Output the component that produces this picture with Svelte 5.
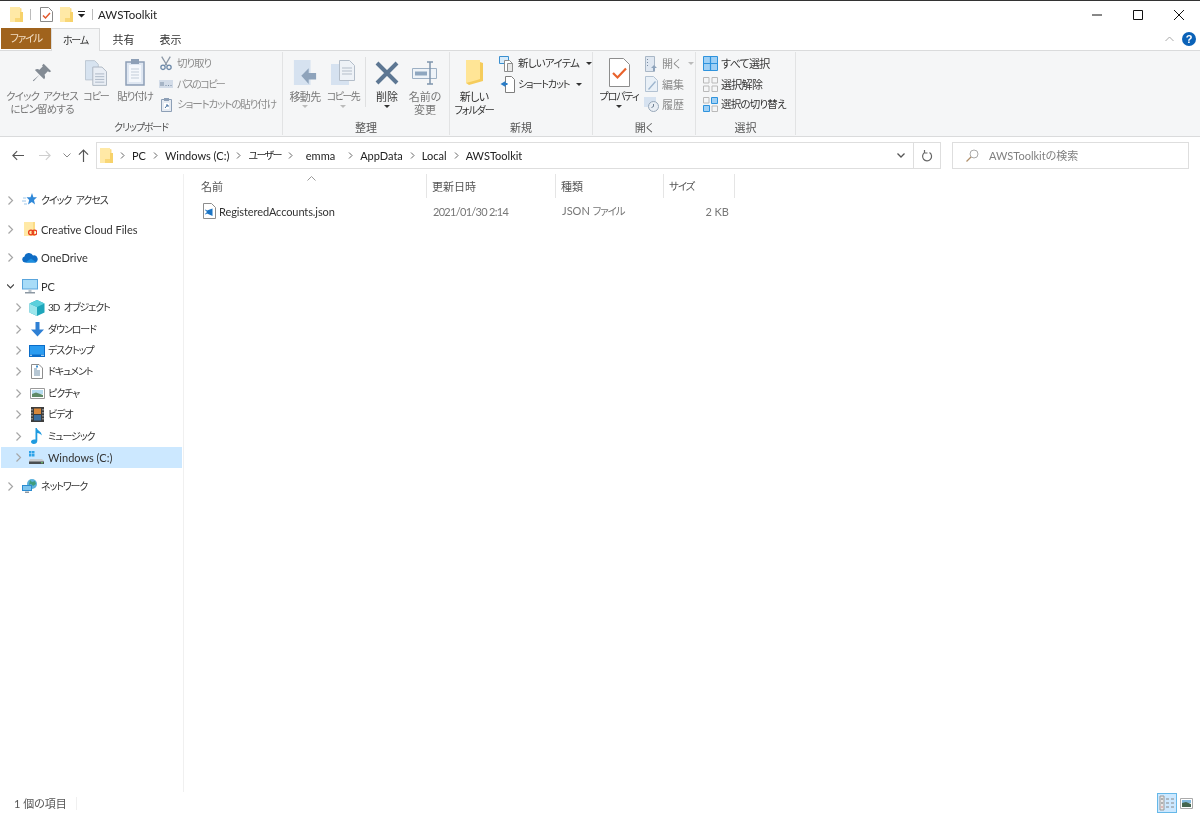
<script>
	const icons = {
		folder: `<svg width="13" height="15" viewBox="0 0 13 15"><path d="M0 0h10v15H0z" fill="#ffe9a6"/><path d="M10 1l1.500 .5V5H10z" fill="#fbdc86"/><path d="M5 11h8v4H5z" fill="#f9d777"/><path d="M10 5h3v10h-3z" fill="#f7d26a"/></svg>`,
		check: `<svg width="13" height="15" viewBox="0 0 13 15"><path d="M.5.5h8l4 4v10H.5z" fill="#fff" stroke="#8a8a8a"/><path d="M3 8.500l2.500 2.500 4.500-5" fill="none" stroke="#e2582c" stroke-width="1.500"/></svg>`,
		star: `<svg width="16" height="16" viewBox="0 0 16 16"><path d="M10 1l1.400 4.200H15l-3 2.800 1 4.500-3.200-2.400L6 12.500l1.200-4.400L4.500 5.200h4z" fill="#2f88d8"/><path d="M1 6h3M0 9h4M2 12h3" stroke="#9cc6ea"/></svg>`,
		cc: `<svg width="14" height="16" viewBox="0 0 14 16"><path d="M1 1h11v14H1z" fill="#fbdc86"/><path d="M1 1h9v14H1z" fill="#ffe9a6"/><circle cx="8" cy="11.500" r="2.400" fill="none" stroke="#e8401e" stroke-width="1.300"/><circle cx="11.500" cy="11.500" r="2.400" fill="none" stroke="#e8401e" stroke-width="1.300"/></svg>`,
		cloud: `<svg width="16" height="11" viewBox="0 0 16 11"><path d="M3 10.500a3 3 0 0 1-.5-5.900A4.500 4.500 0 0 1 11 3.500a3.500 3.500 0 0 1 2 7z" fill="#0f6cc4"/><path d="M3.500 10.500L9 6.500l5.500 4z" fill="#1c8fe0"/></svg>`,
		pc: `<svg width="16" height="15" viewBox="0 0 16 15"><path d="M0 0h16v10.500H0z" fill="#5aa5dc"/><path d="M1 1h14v8.500H1z" fill="#a8dcf8"/><path d="M6.500 10.500h3V13h-3z" fill="#b9c3cb"/><path d="M3 13h10v1.500H3z" fill="#8c98a3"/></svg>`,
		cube: `<svg width="16" height="16" viewBox="0 0 16 16"><path d="M8 0l7.500 3.500v9L8 16 .5 12.500v-9z" fill="#1ea6bb"/><path d="M.5 3.500L8 7v9L.5 12.500z" fill="#9ce6ec"/><path d="M8 7l7.500-3.500L8 0 .5 3.500z" fill="#5bd0dc"/></svg>`,
		down: `<svg width="15" height="15" viewBox="0 0 15 15"><path d="M5.500 0h4v7.500H14L7.500 14.500 1 7.500h4.500z" fill="#2f80d4"/></svg>`,
		desk: `<svg width="16" height="12" viewBox="0 0 16 12"><path d="M0 0h16v12H0z" fill="#0a6cc8"/><path d="M1 1h14v8.500H1z" fill="#2b9cf0"/><path d="M1 10.300h2M12 10.300h3" stroke="#bfe0f8"/></svg>`,
		doc: `<svg width="12" height="15" viewBox="0 0 12 15"><path d="M.5.5h7.500l3.500 3.500v10.500H.5z" fill="#fff" stroke="#8d8d8d"/><path d="M3 5h3M3 7h6M3 9h6M3 11h6" stroke="#6f8fa8"/><path d="M5 1.500h2v2H5z" fill="#3f8fd0"/></svg>`,
		pic: `<svg width="15" height="11" viewBox="0 0 15 11"><path d="M.5.5h14v10H.5z" fill="#fff" stroke="#9a9a9a"/><path d="M2 2h11v4H2z" fill="#b5dcf0"/><path d="M2 6l4-1.500L13 7v2H2z" fill="#5f8a66"/></svg>`,
		film: `<svg width="13" height="15" viewBox="0 0 13 15"><path d="M0 0h13v15H0z" fill="#3d3d3d"/><path d="M3 1.500h7v5.500H3z" fill="#d8873a"/><path d="M3 8h7v5.500H3z" fill="#3a6ea0"/><path d="M1 2v11M12 2v11" stroke="#cfcfcf" stroke-dasharray="1.500 1.500"/></svg>`,
		note: `<svg width="12" height="16" viewBox="0 0 12 16"><path d="M4.500 0h1.300c.5 2.500 5 3.500 5 7.500-1-1.500-3-2.500-4.500-2.500v8c0 2-1.700 3-3.500 3C1 16 0 15 0 13.800c0-1.500 1.700-2.800 4.500-2.200z" fill="#1e9be0"/></svg>`,
		drive: `<svg width="16" height="15" viewBox="0 0 16 15"><path d="M0 1h2.500v2.500H0zM3 1h2.500v2.500H3zM0 4h2.500v2.500H0zM3 4h2.500v2.500H3z" fill="#2ea3e8"/><path d="M1 9h12l2 2v3H0v-3z" fill="#c8ccd0"/><path d="M0 11.500h15V14H0z" fill="#4a4f52"/><path d="M12 12.300h2v1h-2z" fill="#6fd06f"/></svg>`,
		net: `<svg width="16" height="15" viewBox="0 0 16 15"><circle cx="10" cy="5" r="5" fill="#5bb1dc"/><path d="M8 1l2 2 3-1 1 3-3 2-2-2-2 1z" fill="#3e9c7c"/><path d="M0 6h10v6H0z" fill="#2b8bd0"/><path d="M1 7h8v4H1z" fill="#7cc4ee"/><path d="M3 12.500h4V14H3z" fill="#8c98a3"/></svg>`,
		vsjson: `<svg width="13" height="16" viewBox="0 0 13 16"><path d="M.5.5h8l4 4v11H.5z" fill="#fff" stroke="#8d8d8d"/><path d="M9.500 5.500v7.500L4 10.500l-1.500 1L2 11l2-2-2-2 .5-.5L4 7.500z" fill="#1b74c4"/></svg>`,
		pin: `<svg width="20" height="20" viewBox="0 0 24 24"><path d="M14 1l9 9-2 1-2-1-4 4c1 2 1 4-.5 5.500L9 14 2 22l-1-1 8-7-5.500-5.500C5 7 7 7 9 8l4-4-1-1z" fill="#838b94"/></svg>`,
		copy: `<svg width="22" height="26" viewBox="0 0 24 28"><path d="M.5.5h10l4 4v17H.5z" fill="#d7e3f0" stroke="#b9c4d0"/><path d="M8.500 7.500h10l5 5v15h-15z" fill="#e9eef5" stroke="#aab4c0"/><path d="M11 15h10M11 18h10M11 21h10M11 24h10" stroke="#a9b5c3"/></svg>`,
		paste: `<svg width="20" height="27" viewBox="0 0 20 27"><path d="M1 3h18v23H1z" fill="#dfe7f2" stroke="#8d9fb6" stroke-width="1.500"/><path d="M4 6h12v17H4z" fill="#f5f8fc"/><path d="M6 0h8v5H6z" fill="#8d9fb6"/><path d="M6 10h8M6 13h8M6 16h8M6 19h8" stroke="#c3cdd9"/></svg>`,
		cut: `<svg width="12" height="15" viewBox="0 0 14 16"><path d="M2 0l6 10M12 0L6 10" stroke="#8b97a5" stroke-width="1.500"/><circle cx="3.500" cy="12.500" r="2.500" fill="none" stroke="#6b88a8" stroke-width="1.500"/><circle cx="10.500" cy="12.500" r="2.500" fill="none" stroke="#6b88a8" stroke-width="1.500"/></svg>`,
		path: `<svg width="14" height="8" viewBox="0 0 14 8"><path d="M0 0h14v8H0z" fill="#d3dce8"/><path d="M2 2v4M4 2v4M7 5v1M9.500 5v1M12 5v1" stroke="#7a8da3"/></svg>`,
		short: `<svg width="11" height="14" viewBox="0 0 11 14"><path d="M.5 1.500h10v12H.5z" fill="#e6ebf2" stroke="#8d9fb6"/><path d="M3 0h5v3H3z" fill="#8d9fb6"/><path d="M3 5h5v6H3z" fill="#fff"/><path d="M4 10l2.500-3M5 7h2v2" fill="none" stroke="#446f9f"/></svg>`,
		move: `<svg width="24" height="25" viewBox="0 0 24 27"><path d="M0 0h18v27H0z" fill="#d6e2f0"/><path d="M8 17l8-8v5h8v7h-8v5z" fill="#8ea3bb"/></svg>`,
		copyto: `<svg width="24" height="25" viewBox="0 0 24 25"><path d="M0 4h18v21H0z" fill="#d6e2f0"/><path d="M8.500.5h10l5 5v15h-15z" fill="#eef2f7" stroke="#b3bdc9"/><path d="M11 8h10M11 11h10M11 14h10" stroke="#b3bdc9"/></svg>`,
		del: `<svg width="24" height="24" viewBox="0 0 24 24"><path d="M2 2l20 20M22 2L2 22" stroke="#5d7793" stroke-width="4"/></svg>`,
		rename: `<svg width="26" height="24" viewBox="0 0 26 24"><path d="M.5 7.500h24v10H.5z" fill="#eef3f8" stroke="#9db0c4"/><path d="M3 10.500h12v4H3z" fill="#8ea6bf"/><path d="M18 1v22M15 1h6M15 23h6" stroke="#7f95ad" stroke-width="1.500"/></svg>`,
		newfolder: `<svg width="17" height="25" viewBox="0 0 17 25"><path d="M0 0h14v2l3 1v18l-14 4-3-2z" fill="#f5cc5c"/><path d="M0 0h14v19l-3 1-11 3z" fill="#ffe596"/></svg>`,
		newitem: `<svg width="16" height="16" viewBox="0 0 16 16"><path d="M.5.500h9v7h-9z" fill="#d7ebfa" stroke="#3a8fd0"/><path d="M5.500 4.500h5l3 3v8h-8z" fill="#fff" stroke="#8d8d8d"/><path d="M8.500 7.500h5v8h-5z" fill="#e8e8e8" stroke="#8d8d8d"/></svg>`,
		newshort: `<svg width="15" height="17" viewBox="0 0 15 17"><path d="M5.500.5h6l3 3v13h-9z" fill="#fff" stroke="#7e7e7e"/><path d="M.5 8l5-3v2h2v2h-2v2z" fill="#2a7dc8"/></svg>`,
		props: `<svg width="21" height="29" viewBox="0 0 21 29"><path d="M.5.5h14l6 6v22H.5z" fill="#fff" stroke="#8d8d8d"/><path d="M4 15l4.500 4.500L17 10.500" fill="none" stroke="#e8622c" stroke-width="2.200"/></svg>`,
		open: `<svg width="13" height="16" viewBox="0 0 13 16"><path d="M.5.500h9v15h-9z" fill="#dfe7f1" stroke="#a9b7c6"/><path d="M2 3h1v1H2zM2 6h1v1H2zM2 9h1v1H2z" fill="#7a8da3"/><path d="M9 9l3 3h-2v3H8v-3H6z" fill="#8ea3bb"/></svg>`,
		edit: `<svg width="13" height="16" viewBox="0 0 13 16"><path d="M.5.500h8l4 4v11H.5z" fill="#e9f0f7" stroke="#b3c2d2"/><path d="M3 13l7-8 1 1-7 8z" fill="#9cb4cd"/></svg>`,
		hist: `<svg width="15" height="15" viewBox="0 0 15 15"><path d="M0 0h12v10H0z" fill="#d6e2f0"/><circle cx="9.500" cy="9.500" r="5" fill="#e9eef4" stroke="#97a7b8"/><path d="M9.500 7v2.500l-2 1" fill="none" stroke="#6f8093"/></svg>`,
		selall: `<svg width="15" height="15" viewBox="0 0 15 15"><path d="M.5.500h14v14H.5z" fill="#9fd0f5" stroke="#2e93dd"/><path d="M7.500 0v15M0 7.500h15" stroke="#2e93dd" stroke-width="1.200"/></svg>`,
		selnone: `<svg width="15" height="15" viewBox="0 0 15 15"><path d="M.5.500h5.500v5.500H.5zM9 .5h5.500v5.500H9zM.5 9h5.500v5.500H.5zM9 9h5.500v5.500H9z" fill="none" stroke="#b9b9b9"/></svg>`,
		selinv: `<svg width="15" height="15" viewBox="0 0 15 15"><path d="M.5.500h5.500v5.500H.5zM9 9h5.500v5.500H9z" fill="none" stroke="#b9b9b9"/><path d="M8.500.5h6v6h-6zM.5 8.500h6v6h-6z" fill="#9fd0f5" stroke="#2e93dd"/></svg>`
	};

	const navRows = [
		{ icon: 'star', label: 'クイック アクセス', depth: 0, gap: 0 },
		{ icon: 'cc', label: 'Creative Cloud Files', depth: 0, gap: 7.500 },
		{ icon: 'cloud', label: 'OneDrive', depth: 0, gap: 7 },
		{ icon: 'pc', label: 'PC', depth: 0, gap: 7.500, open: true },
		{ icon: 'cube', label: '3D オブジェクト', depth: 1 },
		{ icon: 'down', label: 'ダウンロード', depth: 1 },
		{ icon: 'desk', label: 'デスクトップ', depth: 1 },
		{ icon: 'doc', label: 'ドキュメント', depth: 1 },
		{ icon: 'pic', label: 'ピクチャ', depth: 1 },
		{ icon: 'film', label: 'ビデオ', depth: 1 },
		{ icon: 'note', label: 'ミュージック', depth: 1 },
		{ icon: 'drive', label: 'Windows (C:)', depth: 1, selected: true },
		{ icon: 'net', label: 'ネットワーク', depth: 0, gap: 7.500 }
	];

	const crumbs = ['PC', 'Windows (C:)', 'ユーザー', 'emma', 'AppData', 'Local', 'AWSToolkit'];
	const columns = ['名前', '更新日時', '種類', 'サイズ'];
	const hasKana = (s) => /[\u30a0-\u30ff]/.test(s);
</script>

<div class="window">
	<header class="titlebar">
		<span class="ico">{@html icons.folder}</span>
		<i class="qsep"></i>
		<span class="ico">{@html icons.check}</span>
		<span class="ico">{@html icons.folder}</span>
		<svg class="qdrop" width="7" height="7" viewBox="0 0 7 7"><path d="M0 0h7v1H0zM0 3h7L3.500 6.500z" fill="#222" /></svg>
		<i class="qsep"></i>
		<span class="title">AWSToolkit</span>
		<div class="winbtns">
			<svg width="10" height="10" viewBox="0 0 10 10"><path d="M0 5h10" stroke="#111" /></svg>
			<svg width="10" height="10" viewBox="0 0 10 10"><path d="M.5.5h9v9h-9z" fill="none" stroke="#111" /></svg>
			<svg width="10" height="10" viewBox="0 0 10 10"><path d="M0 0l10 10M10 0L0 10" stroke="#111" /></svg>
		</div>
	</header>

	<nav class="tabs">
		<button class="tab file k15">ファイル</button>
		<button class="tab active k2">ホーム</button>
		<button class="tab">共有</button>
		<button class="tab">表示</button>
		<div class="tabs-right">
			<svg width="9" height="6" viewBox="0 0 9 6"><path d="M.5 5L4.500 1l4 4" fill="none" stroke="#a8a8a8" /></svg>
			<span class="help">?</span>
		</div>
	</nav>

	<section class="ribbon">
		<div class="group" style="width:283px">
			<div class="items clip">
				<div class="big off pinbtn">
					<span class="ico h30">{@html icons.pin}</span>
					<span class="k1">クイック アクセス<br />にピン留めする</span>
				</div>
				<div class="big off copybtn">
					<span class="ico h30">{@html icons.copy}</span>
					<span class="k2">コピー</span>
				</div>
				<div class="big off pastebtn">
					<span class="ico h30">{@html icons.paste}</span>
					<span class="k15">貼り付け</span>
				</div>
				<div class="smalls off">
					<div class="small"><span class="ico s16">{@html icons.cut}</span><span class="k15">切り取り</span></div>
					<div class="small"><span class="ico s16">{@html icons.path}</span><span class="k25">パスのコピー</span></div>
					<div class="small"><span class="ico s16">{@html icons.short}</span><span class="k15">ショートカットの貼り付け</span></div>
				</div>
			</div>
			<div class="glabel k2">クリップボード</div>
		</div>

		<div class="group" style="width:167px">
			<div class="items org">
				<div class="big off w38">
					<span class="ico h30">{@html icons.move}</span>
					<span class="k05">移動先</span>
					<b class="caret light"></b>
				</div>
				<div class="big off w38">
					<span class="ico h30">{@html icons.copyto}</span>
					<span class="k25">コピー先</span>
					<b class="caret light"></b>
				</div>
				<i class="vsep"></i>
				<div class="big w38">
					<span class="ico h30">{@html icons.del}</span>
					<span>削除</span>
					<b class="caret"></b>
				</div>
				<div class="big off w38">
					<span class="ico h30">{@html icons.rename}</span>
					<span>名前の<br />変更</span>
				</div>
			</div>
			<div class="glabel">整理</div>
		</div>

		<div class="group" style="width:143px">
			<div class="items nw">
				<div class="big w48">
					<span class="ico h30">{@html icons.newfolder}</span>
					<span class="k05">新しい<br /><span class="k2">フォルダー</span></span>
				</div>
				<div class="smalls">
					<div class="small"><span class="ico s16">{@html icons.newitem}</span><span class="k1">新しいアイテム</span><b class="caret"></b></div>
					<div class="small"><span class="ico s16">{@html icons.newshort}</span><span class="k2">ショートカット</span><b class="caret"></b></div>
				</div>
			</div>
			<div class="glabel">新規</div>
		</div>

		<div class="group" style="width:103px">
			<div class="items op">
				<div class="big w52">
					<span class="ico h30">{@html icons.props}</span>
					<span class="k2">プロパティ</span>
					<b class="caret"></b>
				</div>
				<div class="smalls off">
					<div class="small"><span class="ico s16">{@html icons.open}</span>開く<b class="caret light"></b></div>
					<div class="small"><span class="ico s16">{@html icons.edit}</span>編集</div>
					<div class="small"><span class="ico s16">{@html icons.hist}</span>履歴</div>
				</div>
			</div>
			<div class="glabel">開く</div>
		</div>

		<div class="group" style="width:100px">
			<div class="items sel">
				<div class="smalls">
					<div class="small"><span class="ico s16">{@html icons.selall}</span><span class="k05">すべて選択</span></div>
					<div class="small"><span class="ico s16">{@html icons.selnone}</span><span class="k05">選択解除</span></div>
					<div class="small"><span class="ico s16">{@html icons.selinv}</span><span class="k1">選択の切り替え</span></div>
				</div>
			</div>
			<div class="glabel">選択</div>
		</div>
	</section>

	<div class="addressrow">
		<div class="navbtns">
			<svg width="12" height="11" viewBox="0 0 14 12"><path d="M6 1L1 6l5 5M1 6h13" fill="none" stroke="#555" stroke-width="1.300" /></svg>
			<svg width="12" height="11" viewBox="0 0 14 12"><path d="M8 1l5 5-5 5M13 6H0" fill="none" stroke="#cfcfcf" stroke-width="1.300" /></svg>
			<svg width="8" height="5" viewBox="0 0 8 5"><path d="M.5.5L4 4 7.500.5" fill="none" stroke="#888" /></svg>
			<svg width="11" height="13" viewBox="0 0 12 14"><path d="M1 6l5-5 5 5M6 1v13" fill="none" stroke="#555" stroke-width="1.300" /></svg>
		</div>
		<div class="addressbox">
			<span class="ico">{@html icons.folder}</span>
			<div class="crumbs">
				{#each crumbs as crumb}
					<svg width="5" height="7" viewBox="0 0 5 7"><path d="M1 .5L4 3.500 1 6.500" fill="none" stroke="#666" /></svg>
					<span class:k25={hasKana(crumb)} class:pad={crumb === 'emma'}>{crumb}</span>
				{/each}
			</div>
			<div class="addr-end">
				<svg width="8" height="5" viewBox="0 0 8 5"><path d="M.5.5L4 4 7.500.5" fill="none" stroke="#555" stroke-width="1.300" /></svg>
			</div>
			<div class="addr-refresh">
				<svg width="12" height="12" viewBox="0 0 12 12"><path d="M4 2.300A4.500 4.500 0 1 0 8.500 2.500M3.500 0v3h3" fill="none" stroke="#666" stroke-width="1.200" /></svg>
			</div>
		</div>
		<div class="searchbox">
			<svg width="13" height="13" viewBox="0 0 13 13"><circle cx="8" cy="5" r="4" fill="none" stroke="#aaa" /><path d="M5 8l-4.500 4.500" stroke="#b08f6a" stroke-width="1.200" /></svg>
			<span>AWSToolkitの検索</span>
		</div>
	</div>

	<div class="body">
		<aside class="navpane">
			{#each navRows as row}
				<div class="navrow depth{row.depth}" class:selected={row.selected} style="margin-top:{row.gap ?? 0}px">
					<svg class="chev" width="7" height="9" viewBox="0 0 7 9">
						{#if row.open}
							<path d="M0 2.500l3.500 3.500L7 2.500" fill="none" stroke="#444" stroke-width="1.200" />
						{:else}
							<path d="M1.500.5l4 4-4 4" fill="none" stroke="#a6a6a6" stroke-width="1.200" />
						{/if}
					</svg>
					<span class="ico nav-ico">{@html icons[row.icon]}</span>
					<span class:k2={hasKana(row.label)}>{row.label}</span>
				</div>
			{/each}
		</aside>

		<main class="files">
			<svg class="sortcaret" width="9" height="5" viewBox="0 0 9 5"><path d="M.5 4.500l4-4 4 4" fill="none" stroke="#999" /></svg>
			<div class="filerow head">
				{#each columns as col}
					<div class="col"><span class:k15={hasKana(col)}>{col}</span></div>
				{/each}
			</div>
			<div class="filerow item">
				<div class="fname"><span class="ico">{@html icons.vsjson}</span>RegisteredAccounts.json</div>
				<div class="fmeta date">2021/01/30 2:14</div>
				<div class="fmeta">JSON <span class="k15">ファイル</span></div>
				<div class="fmeta size">2 KB</div>
			</div>
		</main>
	</div>

	<footer class="status">
		<span class="count">1 個の項目</span>
		<div class="views">
			<span class="view on">
				<svg width="16" height="16" viewBox="0 0 16 16"><path d="M1 1h4v14H1z" fill="#e8e8e8" stroke="#999" /><path d="M2 4h2M2 8h2" stroke="#777" /><path d="M2 12h2" stroke="#d98a8a" /><path d="M7 4h3M12 4h3M7 8h3M12 8h3M7 12h3M12 12h3" stroke="#888" /></svg>
			</span>
			<span class="view">
				<svg width="13" height="11" viewBox="0 0 13 11"><path d="M.5.5h12v10H.5z" fill="#fff" stroke="#aaa" /><path d="M2 2h9v3H2z" fill="#7fb7dc" /><path d="M2 5l4-1 5 2v3H2z" fill="#44664f" /></svg>
			</span>
		</div>
	</footer>
</div>

<style>
	:global(body) {
		margin: 0;
		background: #fff;
	}
	.window {
		width: 1200px;
		height: 814px;
		display: flex;
		flex-direction: column;
		overflow: hidden;
		border-top: 1px solid #333;
		box-sizing: border-box;
		color: #333;
		font-family: Lato, "Noto Sans CJK JP", sans-serif;
		font-feature-settings: "palt";
		font-size: 11px;
		line-height: 13px;
		filter: blur(0.35px);
	}
	.ico {
		display: inline-flex;
		align-items: center;
		justify-content: center;
		flex: none;
	}
	.ico :global(svg) {
		display: block;
	}
	/* kana runs are much narrower in the original UI font */
	.k05 {
		letter-spacing: -0.7px;
	}
	.k1 {
		font-size: 10.500px;
		letter-spacing: -0.800px;
		word-spacing: 2px;
	}
	.k15 {
		font-size: 10.500px;
		letter-spacing: -1.100px;
	}
	.k2 {
		font-size: 10px;
		letter-spacing: -1.100px;
		word-spacing: 3px;
	}
	.k25 {
		font-size: 10px;
		letter-spacing: -1.600px;
	}

	/* title bar */
	.titlebar {
		height: 27px;
		display: flex;
		align-items: center;
		padding-left: 10px;
		flex: none;
	}
	.qsep {
		width: 1px;
		height: 11px;
		background: #bbb;
		margin: 0 9px 0 7px;
	}
	.titlebar .ico + .ico {
		margin-left: 7px;
	}
	.qdrop {
		margin-left: 5px;
	}
	.title {
		font-size: 11.500px;
		color: #222;
		margin-left: -4px;
	}
	.winbtns {
		margin-left: auto;
		display: flex;
		gap: 31px;
		padding-right: 16px;
		align-items: center;
	}

	/* tabs */
	.tabs {
		height: 22px;
		display: flex;
		flex: none;
		position: relative;
		z-index: 1;
	}
	.tab {
		border: 0;
		background: transparent;
		padding: 0;
		width: 47px;
		height: 22px;
		font-family: inherit;
		font-size: 11px;
		line-height: 13px;
		font-feature-settings: inherit;
		color: #333;
	}
	.tab.k15 {
		font-size: 10.500px;
	}
	.tab.k2 {
		font-size: 10px;
	}
	.tab.file {
		width: 50px;
		margin-left: 1px;
		height: 21px;
		background: #a0631d;
		color: #f3dfc6;
	}
	.tab.active {
		width: 49px;
		background: #f5f6f7;
		border: 1px solid #dadbdc;
		border-bottom: 0;
		box-sizing: border-box;
		height: 23px;
	}
	.tabs-right {
		margin-left: auto;
		display: flex;
		align-items: center;
		gap: 8px;
		padding-right: 4px;
	}
	.help {
		width: 14px;
		height: 14px;
		border-radius: 50%;
		background: #0b62b8;
		color: #fff;
		font: bold 11px/14px "Liberation Sans", sans-serif;
		text-align: center;
	}

	/* ribbon */
	.ribbon {
		height: 87px;
		flex: none;
		display: flex;
		background: #f5f6f7;
		border-top: 1px solid #dadbdc;
		border-bottom: 1px solid #dadbdc;
		box-sizing: border-box;
	}
	.group {
		height: 83px;
		margin-top: 1px;
		display: flex;
		flex-direction: column;
		border-right: 1px solid #e2e3e4;
		box-sizing: border-box;
	}
	.items {
		flex: 1;
		display: flex;
		min-height: 0;
		padding-top: 5px;
	}
	.glabel {
		height: 14px;
		text-align: center;
		color: #555;
		flex: none;
	}
	.big {
		display: flex;
		flex: none;
		flex-direction: column;
		align-items: center;
		text-align: center;
		white-space: nowrap;
	}
	.off {
		color: #8c8c8c;
	}
	.big.off > span:not(.ico) {
		color: #777;
	}
	.h30 {
		height: 31px;
		margin-bottom: 2px;
	}
	.w38 {
		width: 38px;
	}
	.w48 {
		width: 48px;
	}
	.w52 {
		width: 52px;
	}
	.caret {
		width: 0;
		height: 0;
		margin-top: 2px;
		border: 3px solid transparent;
		border-top-color: #333;
		border-bottom: 0;
	}
	.caret.light {
		border-top-color: #bbb;
	}
	.smalls {
		display: flex;
		flex-direction: column;
		gap: 3.500px;
		margin-top: -2px;
	}
	.small {
		height: 17px;
		display: flex;
		align-items: center;
		gap: 3px;
		white-space: nowrap;
	}
	.small .caret {
		margin: 0 0 0 4px;
	}
	.s16 {
		width: 16px;
	}
	.clip {
		padding-left: 5px;
	}
	.pinbtn {
		width: 74px;
	}
	.copybtn {
		width: 34px;
	}
	.pastebtn {
		width: 44px;
	}
	.clip .smalls {
		margin-left: 1px;
	}
	.org {
		padding-left: 3px;
	}
	.vsep {
		width: 1px;
		height: 50px;
		background: #dfe0e1;
		margin: 0 2px 0 3px;
	}
	.nw .smalls {
		margin-left: 1px;
	}
	.op .smalls {
		margin-left: -2px;
	}
	.sel {
		padding-left: 6px;
	}

	/* address */
	.addressrow {
		height: 37px;
		display: flex;
		align-items: center;
		flex: none;
		padding-right: 11px;
	}
	.navbtns {
		width: 96px;
		display: grid;
		grid-template-columns: 27px 24px 15px auto;
		align-items: center;
		padding-left: 12px;
		box-sizing: border-box;
		flex: none;
	}
	.addressbox {
		width: 845px;
		height: 27px;
		flex: none;
		border: 1px solid #dedede;
		box-sizing: border-box;
		display: flex;
		align-items: center;
		padding-left: 3px;
		color: #222;
	}
	.crumbs {
		flex: 1;
		display: flex;
		align-items: center;
		gap: 7px;
		margin-left: 7px;
	}
	.crumbs .pad {
		padding: 0 6px;
	}
	.addr-end,
	.addr-refresh {
		height: 100%;
		display: flex;
		align-items: center;
		justify-content: center;
	}
	.addr-end {
		width: 25px;
		border-right: 1px solid #dedede;
	}
	.addr-refresh {
		width: 26px;
	}
	.searchbox {
		margin-left: 11px;
		flex: 1;
		height: 27px;
		border: 1px solid #dedede;
		box-sizing: border-box;
		display: flex;
		align-items: center;
		gap: 10px;
		padding-left: 13px;
		color: #808080;
	}

	/* body */
	.body {
		flex: 1;
		display: flex;
		min-height: 0;
	}
	.navpane {
		width: 184px;
		flex: none;
		border-right: 1px solid #f0f0f0;
		box-sizing: border-box;
		padding: 15.500px 0 0 1px;
	}
	.navrow {
		height: 21.400px;
		width: 181px;
		box-sizing: border-box;
		display: flex;
		align-items: center;
		gap: 7px;
		color: #333;
		white-space: nowrap;
	}
	.depth0 {
		padding-left: 6px;
	}
	.depth1 {
		padding-left: 14px;
	}
	.navrow.selected {
		background: #cce8ff;
	}
	.chev {
		flex: none;
	}
	.nav-ico {
		width: 16px;
		margin-right: -4px;
	}
	.depth0 .nav-ico {
		margin-left: 1px;
	}
	.files {
		flex: 1;
		position: relative;
	}
	.sortcaret {
		position: absolute;
		left: 123px;
		top: 2px;
	}
	.filerow {
		display: grid;
		grid-template-columns: 243px 129px 108px 71px;
	}
	.head {
		height: 24px;
	}
	.col {
		border-right: 1px solid #e5e5e5;
		padding-left: 5px;
		color: #555;
		display: flex;
		align-items: center;
		height: 24px;
	}
	.col:first-child {
		padding-left: 17px;
	}
	.item {
		margin-top: 2px;
		height: 22px;
		align-items: center;
	}
	.fname {
		display: flex;
		align-items: center;
		gap: 3px;
		padding-left: 19px;
		color: #333;
		letter-spacing: -0.100px;
	}
	.fmeta {
		padding-left: 6px;
		color: #777;
	}
	.date {
		letter-spacing: -0.700px;
	}
	.size {
		text-align: right;
		padding: 0 6px 0 0;
	}

	/* status */
	.status {
		height: 22px;
		flex: none;
		display: flex;
		align-items: center;
		padding-left: 14px;
		padding-right: 7px;
	}
	.count {
		color: #555;
		padding-right: 9px;
		border-right: 1px solid #f0f0f0;
	}
	.views {
		margin-left: auto;
		display: flex;
		align-items: center;
		gap: 3px;
	}
	.view {
		display: flex;
		align-items: center;
		justify-content: center;
	}
	.view.on {
		width: 20px;
		height: 20px;
		box-sizing: border-box;
		background: #cce8ff;
		border: 1px solid #66b8e8;
	}
</style>
